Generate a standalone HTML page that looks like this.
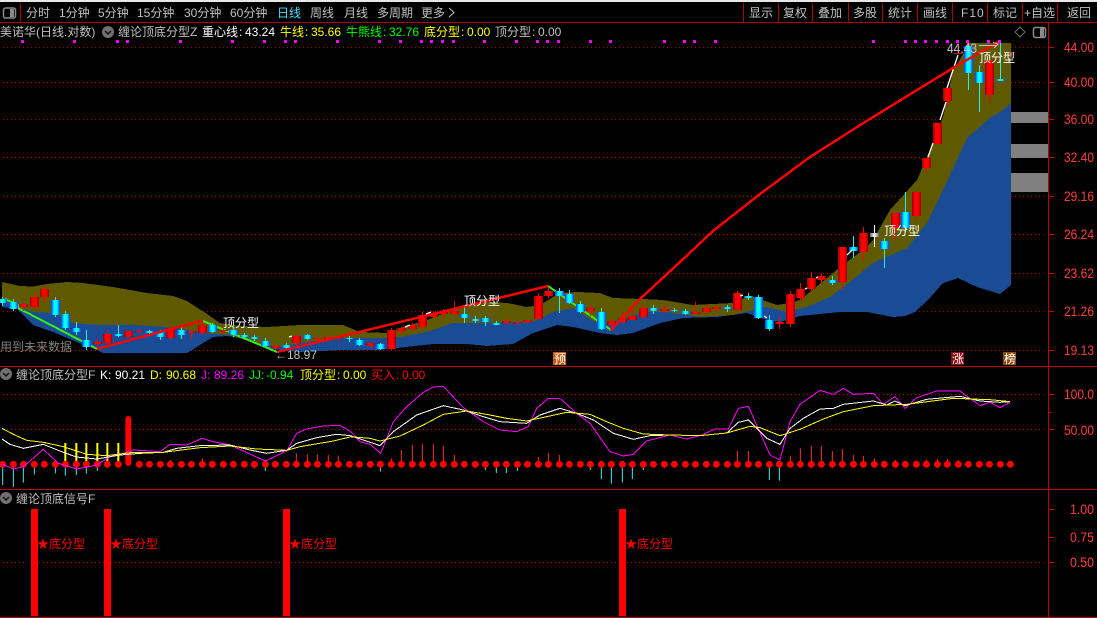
<!DOCTYPE html>
<html><head><meta charset="utf-8"><style>
html,body{margin:0;padding:0;background:#000;width:1097px;height:618px;overflow:hidden}
svg{display:block}
text{font-family:"Liberation Sans","WenQuanYi Zen Hei","Noto Sans CJK SC",sans-serif;font-size:12px;white-space:pre}
.t text{fill:#c0c0c0}
.ax text{fill:#ff3c3c;font-size:14px}
polyline{shape-rendering:crispEdges}
</style></head><body>
<svg width="1097" height="618" viewBox="0 0 1097 618" xmlns="http://www.w3.org/2000/svg">
<defs>
<linearGradient id="R"><stop offset="0" stop-color="#960000"/><stop offset=".3" stop-color="#f00"/><stop offset=".7" stop-color="#f00"/><stop offset="1" stop-color="#960000"/></linearGradient>
<linearGradient id="B"><stop offset="0" stop-color="#0038ff"/><stop offset=".35" stop-color="#0ff"/><stop offset=".65" stop-color="#0ff"/><stop offset="1" stop-color="#0038ff"/></linearGradient>
<linearGradient id="W"><stop offset="0" stop-color="#666"/><stop offset=".5" stop-color="#fff"/><stop offset="1" stop-color="#666"/></linearGradient>
</defs>
<rect width="1097" height="618" fill="#000"/>
<rect width="1097" height="2" fill="#e8e8e8"/>

<!-- toolbar -->
<g shape-rendering="crispEdges">
<rect x="0" y="22" width="1097" height="1" fill="#b00000"/>
<path d="M20.500 3V22M743.500 3V22M778.500 3V22M812.500 3V22M848.500 3V22M882.500 3V22M917.500 3V22M952.500 3V22M987.500 3V22M1022.500 3V22M1057.500 3V22" stroke="#b00000" fill="none"/>
</g>
<rect x="3.500" y="8" width="12" height="10" rx="2" fill="none" stroke="#8a8a8a" stroke-width="1.500"/><rect x="10" y="9" width="4" height="8" fill="#8a8a8a"/>
<g class="t">
<text x="26" y="17">分时</text><text x="59" y="17">1分钟</text><text x="98" y="17">5分钟</text><text x="137" y="17">15分钟</text><text x="184" y="17">30分钟</text><text x="230" y="17">60分钟</text>
<text x="277" y="17" style="fill:#4fe0ff">日线</text><text x="310" y="17">周线</text><text x="344" y="17">月线</text><text x="377" y="17">多周期</text><text x="421" y="17">更多</text>
<path d="M449 8l5 4.500-5 4.500" fill="none" stroke="#c0c0c0"/>
<text x="749" y="17">显示</text><text x="783" y="17">复权</text><text x="818" y="17">叠加</text><text x="853" y="17">多股</text><text x="888" y="17">统计</text><text x="923" y="17">画线</text><text x="961" y="17" style="letter-spacing:1px">F10</text><text x="993" y="17">标记</text><text x="1024" y="17">+自选</text><text x="1067" y="17">返回</text>
</g>

<!-- grid -->
<path d="M3 47.500H1045M3 82.500H1045M3 119.500H1045M3 157.500H1045M3 196.500H1045M3 234.500H1045M3 273.500H1045M3 311.500H1045M3 350.500H1045M3 394.500H1045M3 429.500H1045M3 562.500H1045" stroke="#b00000" stroke-dasharray="1 3" fill="none" shape-rendering="crispEdges"/>

<!-- price bands -->
<polygon fill="#5f5a00" points="2,282 20,286 33,286.500 47,284 67,282 83,283 113,287 147,293 173,296 187,301 207,314 220,323 240,326 267,327 300,325 343,325 360,332 387,333 400,328 427,320 447,312 463,305 487,302 507,303 527,307 540,305 560,293 577,292 600,293 613,298 643,299 663,300 693,305 733,303 747,297 753,297 777,305 790,303 800,300 833,273 840,267 863,250 873,240 890,210 917,180 930,150 943,117 953,71 963,54 967,43 1011,43 1011,103 1003,110 990,118 967,138 943,190 927,223 907,248 873,263 850,282 830,297 807,307 787,312 767,307 753,310 733,315 700,317 667,312 643,312 620,320 600,325 573,308 553,312 533,322 513,323 453,323 427,332 400,337 387,338 343,338 300,343 283,347 263,345 247,340 227,335 207,333 187,330 167,327 133,325 100,325 73,323 53,313 33,312 20,308 2,301" shape-rendering="crispEdges"/>
<polygon fill="#1a4c96" points="2,307 17,309 33,325 53,332 77,342 97,350 103,353 187,353 200,345 213,337 227,336 240,338 260,346 273,349 300,352 343,350 380,350 397,348 433,344 467,344 487,346 513,344 533,333 557,325 573,327 600,333 617,335 633,333 660,323 683,318 717,317 747,313 767,320 780,322 800,316 840,312 867,312 893,317 905,316 915,312 928,300 943,283 958,278 977,287 1000,294 1011,285 1011,103 1003,110 990,118 967,138 943,190 927,223 907,248 873,263 850,282 830,297 807,307 787,312 767,307 753,310 733,315 700,317 667,312 643,312 620,320 600,325 573,308 553,312 533,322 513,323 453,323 427,332 400,337 387,338 343,338 300,343 283,347 263,345 247,340 227,335 207,333 187,330 167,327 133,325 100,325 73,323 53,313 33,312 20,308 2,301" shape-rendering="crispEdges"/>

<!-- grey blocks -->
<g fill="#808080" shape-rendering="crispEdges"><rect x="1011" y="112" width="37" height="11"/><rect x="1011" y="144" width="37" height="14"/><rect x="1011" y="173" width="37" height="19"/></g>

<!-- green legs below candles -->
<polyline points="5,299 18,305 18,308 97,349" fill="none" stroke="#30f010" stroke-width="2"/>
<polyline points="203,321 277,352" fill="none" stroke="#30f010" stroke-width="2"/>
<polyline points="548,286 611,330" fill="none" stroke="#30f010" stroke-width="2"/>

<!-- wicks -->
<path fill="none" stroke="#f00" shape-rendering="crispEdges" d="M23.500 303V311M34.500 293V309M44.500 286V303M97.500 338V349M107.500 330V345M128.500 331V337M139.500 329V334M170.500 327V339M191.500 331V339M202.500 321V334M223.500 326V335M275.500 344V350M296.500 333V348M317.500 336V341M328.500 335V341M338.500 335V342M370.500 343V348M391.500 328V350M401.500 327V334M412.500 323V331M422.500 312V328M433.500 311V318M443.500 309V317M454.500 301V316M506.500 318V325M517.500 320V325M527.500 320V323M538.500 293V319M548.500 287V298M590.500 305V316M611.500 321V330M622.500 312V324M632.500 310V320M643.500 304V319M664.500 305V313M695.500 302V314M706.500 304V313M716.500 307V312M737.500 291V310M779.500 316V329M790.500 291V327M800.500 283V302M811.500 272V291M821.500 273V284M842.500 247V290M863.500 227V260M895.500 213V240M916.500 192V220M926.500 158V173M937.500 123V144M947.500 88V107M989.500 60V103"/>
<path fill="none" stroke="#30e8e8" shape-rendering="crispEdges" d="M2.500 297V306M13.500 299V311M55.500 297V317M65.500 311V330M76.500 322V335M86.500 330V350M118.500 325V337M149.500 330V334M160.500 330V340M181.500 327V339M212.500 323V333M233.500 328V337M244.500 333V339M254.500 335V341M265.500 338V347M286.500 343V350M307.500 334V340M349.500 336V342M359.500 338V346M380.500 343V350M464.500 307V323M475.500 316V323M485.500 316V326M496.500 321V325M559.500 288V313M569.500 290V304M580.500 301V313M601.500 308V330M653.500 305V314M674.500 308V312M685.500 309V315M727.500 305V312M748.500 293V300M758.500 295V319M769.500 315V331M832.500 276V285M853.500 236V258M884.500 238V268M905.500 192V232M968.500 42V90M979.500 65V112M1000.500 43V79"/>
<path d="M874.500 225V247" stroke="#fff" shape-rendering="crispEdges"/>

<!-- candle bodies -->
<g fill="url(#R)" shape-rendering="crispEdges">
<rect x="19" y="304" width="9" height="3"/><rect x="30" y="297" width="9" height="10"/><rect x="40" y="289" width="9" height="8"/><rect x="93" y="342" width="9" height="2"/><rect x="103" y="334" width="9" height="9"/><rect x="124" y="331" width="9" height="6"/><rect x="135" y="331" width="9" height="1"/><rect x="166" y="328" width="9" height="10"/><rect x="187" y="331" width="9" height="2"/><rect x="198" y="325" width="9" height="8"/><rect x="219" y="330" width="9" height="1"/><rect x="271" y="346" width="9" height="2"/><rect x="292" y="336" width="9" height="7"/><rect x="313" y="338" width="9" height="1"/><rect x="324" y="337" width="9" height="2"/><rect x="334" y="337" width="9" height="1"/><rect x="366" y="343" width="9" height="3"/><rect x="387" y="330" width="9" height="19"/><rect x="397" y="328" width="9" height="3"/><rect x="408" y="325" width="9" height="4"/><rect x="418" y="315" width="9" height="12"/><rect x="429" y="313" width="9" height="4"/><rect x="439" y="312" width="9" height="2"/><rect x="450" y="311" width="9" height="3"/><rect x="502" y="321" width="9" height="2"/><rect x="513" y="322" width="9" height="1"/><rect x="523" y="320" width="9" height="2"/><rect x="534" y="296" width="9" height="23"/><rect x="544" y="291" width="9" height="5"/><rect x="586" y="308" width="9" height="3"/><rect x="607" y="321" width="9" height="4"/><rect x="618" y="318" width="9" height="4"/><rect x="628" y="316" width="9" height="4"/><rect x="639" y="308" width="9" height="9"/><rect x="660" y="309" width="9" height="2"/><rect x="691" y="312" width="9" height="2"/><rect x="702" y="308" width="9" height="4"/><rect x="712" y="307" width="9" height="2"/><rect x="733" y="293" width="9" height="17"/><rect x="775" y="322" width="9" height="2"/><rect x="786" y="294" width="9" height="30"/><rect x="796" y="289" width="9" height="9"/><rect x="807" y="278" width="9" height="11"/><rect x="817" y="276" width="9" height="4"/><rect x="838" y="247" width="9" height="35"/><rect x="859" y="233" width="9" height="19"/><rect x="891" y="213" width="9" height="15"/><rect x="912" y="192" width="9" height="24"/><rect x="922" y="158" width="9" height="10"/><rect x="933" y="123" width="9" height="21"/><rect x="943" y="88" width="9" height="13"/><rect x="954" y="53" width="9" height="1"/><rect x="985" y="60" width="9" height="35"/><rect x="1006" y="52" width="9" height="1"/>
</g>
<g fill="url(#B)" shape-rendering="crispEdges">
<rect x="-2" y="299" width="9" height="4"/><rect x="9" y="302" width="9" height="7"/><rect x="51" y="300" width="9" height="15"/><rect x="61" y="314" width="9" height="14"/><rect x="72" y="328" width="9" height="4"/><rect x="82" y="340" width="9" height="7"/><rect x="114" y="334" width="9" height="2"/><rect x="145" y="331" width="9" height="2"/><rect x="156" y="332" width="9" height="5"/><rect x="177" y="330" width="9" height="5"/><rect x="208" y="325" width="9" height="7"/><rect x="229" y="330" width="9" height="5"/><rect x="240" y="335" width="9" height="2"/><rect x="250" y="337" width="9" height="2"/><rect x="261" y="341" width="9" height="5"/><rect x="282" y="345" width="9" height="3"/><rect x="303" y="335" width="9" height="4"/><rect x="345" y="338" width="9" height="1"/><rect x="355" y="340" width="9" height="5"/><rect x="376" y="344" width="9" height="5"/><rect x="460" y="314" width="9" height="4"/><rect x="471" y="319" width="9" height="2"/><rect x="481" y="318" width="9" height="4"/><rect x="492" y="323" width="9" height="2"/><rect x="555" y="291" width="9" height="5"/><rect x="565" y="294" width="9" height="9"/><rect x="576" y="304" width="9" height="8"/><rect x="597" y="312" width="9" height="17"/><rect x="649" y="308" width="9" height="3"/><rect x="670" y="310" width="9" height="1"/><rect x="681" y="311" width="9" height="3"/><rect x="723" y="307" width="9" height="2"/><rect x="744" y="296" width="9" height="2"/><rect x="754" y="297" width="9" height="21"/><rect x="765" y="320" width="9" height="9"/><rect x="828" y="280" width="9" height="3"/><rect x="849" y="247" width="9" height="4"/><rect x="880" y="241" width="9" height="8"/><rect x="901" y="212" width="9" height="16"/><rect x="964" y="46" width="9" height="27"/><rect x="975" y="72" width="9" height="11"/><rect x="996" y="79" width="9" height="2"/>
</g>
<rect x="870" y="233" width="9" height="4" fill="url(#W)"/>

<!-- white stroke segments -->
<path d="M847 255l5-5M928 157l5-14M940 120l6-18M947 88l11-33M289 337l3-1M405 327l5-2M426 314l5-2M740 296l3-1M767 318l-3-2M805 289l2-1M816 278l2-1" stroke="#fff" stroke-width="1.300" fill="none"/>

<!-- red legs over candles -->
<polyline points="97,349 203,320.500" fill="none" stroke="#f00" stroke-width="2.500"/>
<polyline points="277,352 548,286" fill="none" stroke="#f00" stroke-width="2.500"/>
<polyline points="611,330 640,299 680,262 713,231 760,194 810,157 865,122 930,82 958,65 1000,41" fill="none" stroke="#f00" stroke-width="2.500"/>

<!-- magenta dots -->
<path d="M21 41.500h3M73 41.500h3M116 41.500h3M126 41.500h3M179 41.500h3M231 41.500h3M263 41.500h3M284 41.500h3M294 41.500h3M336 41.500h3M378 41.500h3M399 41.500h3M420 41.500h3M430 41.500h3M441 41.500h3M452 41.500h3M483 41.500h3M515 41.500h3M536 41.500h3M546 41.500h3M557 41.500h3M589 41.500h3M609 41.500h3M663 41.500h3M683 41.500h3M693 41.500h3M714 41.500h3M872 41.500h3M904 41.500h3M914 41.500h3M924 41.500h3M935 41.500h3M946 41.500h3M956 41.500h3M966 41.500h3M987 41.500h3M998 41.500h3" stroke="#f0f" stroke-width="3" shape-rendering="crispEdges"/>

<!-- chart labels -->
<text x="223" y="327" fill="#fff">顶分型</text><text x="464" y="305" fill="#fff">顶分型</text><text x="884" y="235" fill="#fff">顶分型</text><text x="979" y="62" fill="#fff">顶分型</text>
<text x="947" y="53" fill="#c0c0c0" style="font-size:14px" textLength="30" lengthAdjust="spacingAndGlyphs">44.43</text>
<path d="M979 45.500H997M993 42.500l5 1.500-4 4" stroke="#c0c0c0" fill="none"/>
<text x="275" y="359" fill="#c0c0c0">←18.97</text>
<text x="0" y="351" fill="#808080">用到未来数据</text>
<rect x="553" y="352" width="13" height="13" fill="#c85a10"/><text x="554" y="363" fill="#fff">预</text>
<rect x="951" y="352" width="13" height="13" fill="#8c0a0a"/><text x="952" y="363" fill="#fff">涨</text>
<rect x="1003" y="352" width="13" height="13" fill="#8c4a10"/><text x="1004" y="363" fill="#fff">榜</text>

<!-- title row -->
<text x="0" y="36" fill="#c0c0c0">美诺华(日线.对数)</text>
<circle cx="108" cy="32" r="6" fill="#707070"/><path d="M105 31l3 3 3-3" stroke="#111" stroke-width="1.500" fill="none"/>
<text x="118" y="36" fill="#c0c0c0">缠论顶底分型Z</text>
<text x="202" y="36" fill="#fff">重心线</text><text x="239" y="36" fill="#fff">:</text><text x="245" y="36" fill="#fff">43.24</text>
<text x="280" y="36" fill="#ff0">牛线</text><text x="305" y="36" fill="#ff0">:</text><text x="311" y="36" fill="#ff0">35.66</text>
<text x="346" y="36" fill="#00ff00">牛熊线</text><text x="383" y="36" fill="#00ff00">:</text><text x="389" y="36" fill="#00ff00">32.76</text>
<text x="424" y="36" fill="#ff0">底分型</text><text x="461" y="36" fill="#ff0">:</text><text x="467" y="36" fill="#ff0">0.00</text>
<text x="495" y="36" fill="#c0c0c0">顶分型</text><text x="532" y="36" fill="#c0c0c0">:</text><text x="538" y="36" fill="#c0c0c0">0.00</text>
<path d="M1020 27l5 5-5 5-5-5z" fill="none" stroke="#707070"/>
<rect x="1033.500" y="27.500" width="12" height="10" rx="2" fill="none" stroke="#8a8a8a" stroke-width="1.500"/><rect x="1040" y="28" width="4" height="9" fill="#8a8a8a"/>

<!-- KDJ panel -->
<circle cx="6" cy="374" r="6" fill="#707070"/><path d="M3 373l3 3 3-3" stroke="#111" stroke-width="1.500" fill="none"/>
<text x="16" y="379" fill="#c0c0c0">缠论顶底分型F</text>
<text x="100" y="379" fill="#fff">K:</text><text x="115" y="379" fill="#fff">90.21</text>
<text x="150" y="379" fill="#ff0">D:</text><text x="166" y="379" fill="#ff0">90.68</text>
<text x="201" y="379" fill="#f0f">J:</text><text x="214" y="379" fill="#f0f">89.26</text>
<text x="249" y="379" fill="#00ff00">JJ:</text><text x="266" y="379" fill="#00ff00">-0.94</text>
<text x="300" y="379" fill="#ff0">顶分型</text><text x="337" y="379" fill="#ff0">:</text><text x="343" y="379" fill="#ff0">0.00</text>
<text x="371" y="379" fill="#f00">买入</text><text x="396" y="379" fill="#f00">:</text><text x="402" y="379" fill="#f00">0.00</text>

<g transform="translate(0,365) scale(.33333)" fill="none" stroke-width="3">
<path stroke="#ff3030" d="M511 298V285M607 298V280M889 298V265M922 298V268M952 298V268M985 298V270M1015 298V272"/>
<path stroke="#40e8f0" d="M8 298V360M40 298V366M70 298V353M103 298V328M133 298V308M166 298V325M196 298V332M229 298V330M259 298V326M292 298V318M763 298V310M796 298V318"/>
<path stroke="#ff0" stroke-width="6" d="M196 298V234M229 298V234M259 298V234M292 298V234M322 298V234M355 298V234"/>
<path stroke="#f00" stroke-width="18" stroke-linecap="round" d="M385 294V162"/>
<path stroke="#f00" stroke-width="21" stroke-linecap="round" d="M8 298h.1M40 298h.1M70 298h.1M103 298h.1M133 298h.1M166 298h.1M196 298h.1M229 298h.1M259 298h.1M292 298h.1M322 298h.1M355 298h.1M418 298h.1M448 298h.1M481 298h.1M511 298h.1M544 298h.1M574 298h.1M607 298h.1M637 298h.1M670 298h.1M700 298h.1M733 298h.1M763 298h.1M796 298h.1M826 298h.1M859 298h.1M889 298h.1M922 298h.1M952 298h.1M985 298h.1M1015 298h.1"/>
<polyline stroke="#f0f" points="6,297 40,312 70,305 130,253 175,295 230,312 290,300 330,275 370,265 400,255 480,260 510,238 560,240 607,220 640,230 690,240 730,258 796,288 860,258 890,205 920,192 970,183 1020,181 1050,198"/>
<polyline stroke="#fff" points="6,222 30,238 70,250 130,238 190,262 230,276 290,282 360,270 420,265 490,262 530,250 600,242 690,240 750,255 800,265 860,256 890,235 950,218 1010,208 1050,212"/>
<polyline stroke="#ff0" points="6,190 40,208 80,226 130,232 190,245 260,268 320,272 400,262 490,262 600,248 690,243 770,252 860,256 900,245 1000,228 1050,216"/>
</g>
<g transform="translate(350,365) scale(.33333)" fill="none" stroke-width="3">
<path stroke="#ff3030" d="M124 298V280M154 298V255M187 298V240M217 298V237M250 298V237M280 298V243M313 298V270M565 298V276M595 298V264M628 298V270M658 298V288"/>
<path stroke="#40e8f0" d="M61 298V308M91 298V320M406 298V315M439 298V324M469 298V324M502 298V318M532 298V308M721 298V315M754 298V342M784 298V356M817 298V352M847 298V342M880 298V315"/>
<path stroke="#f00" stroke-width="21" stroke-linecap="round" d="M-2 298h.1M28 298h.1M61 298h.1M91 298h.1M124 298h.1M154 298h.1M187 298h.1M217 298h.1M250 298h.1M280 298h.1M313 298h.1M343 298h.1M376 298h.1M406 298h.1M439 298h.1M469 298h.1M502 298h.1M532 298h.1M565 298h.1M595 298h.1M628 298h.1M658 298h.1M691 298h.1M721 298h.1M754 298h.1M784 298h.1M817 298h.1M847 298h.1M880 298h.1M910 298h.1M943 298h.1M973 298h.1M1006 298h.1M1036 298h.1"/>
<polyline stroke="#f0f" points="0,198 30,230 60,238 92,265 130,170 170,125 220,82 250,66 280,64 340,128 400,170 450,195 500,200 535,185 560,130 595,100 630,100 680,145 720,175 780,260 820,273 850,268 890,228 960,210 1010,222 1050,212"/>
<polyline stroke="#fff" points="0,212 40,225 90,242 130,200 200,150 280,122 340,135 400,155 450,170 530,175 570,150 630,130 680,145 730,165 790,205 850,223 900,212 960,210 1050,212"/>
<polyline stroke="#ff0" points="0,215 60,220 90,228 150,213 220,180 280,148 350,138 420,150 470,160 530,168 590,155 650,142 720,148 770,170 820,190 880,207 960,210 1050,212"/>
</g>
<g transform="translate(700,365) scale(.33333)" fill="none" stroke-width="3">
<path stroke="#ff3030" d="M112 298V258M145 298V258M271 298V273M301 298V250M334 298V243M364 298V243M397 298V258M427 298V252M460 298V270M490 298V273M523 298V280M586 298V285M679 298V283M712 298V282M742 298V282M775 298V285"/>
<path stroke="#40e8f0" d="M208 298V345M238 298V347M838 298V308M901 298V308"/>
<path stroke="#f00" stroke-width="21" stroke-linecap="round" d="M19 298h.1M49 298h.1M82 298h.1M112 298h.1M145 298h.1M175 298h.1M208 298h.1M238 298h.1M271 298h.1M301 298h.1M334 298h.1M364 298h.1M397 298h.1M427 298h.1M460 298h.1M490 298h.1M523 298h.1M553 298h.1M586 298h.1M616 298h.1M649 298h.1M679 298h.1M712 298h.1M742 298h.1M775 298h.1M805 298h.1M838 298h.1M868 298h.1M901 298h.1M931 298h.1"/>
<polyline stroke="#f0f" points="0,212 45,192 85,192 115,130 145,124 210,270 240,285 270,170 300,118 360,76 400,88 430,70 460,88 520,85 550,118 585,95 615,130 650,98 710,78 780,78 840,122 870,112 900,128 930,112"/>
<polyline stroke="#fff" points="0,212 80,204 115,172 145,165 200,220 240,238 270,190 310,160 360,132 400,130 430,118 520,108 560,120 585,108 615,122 680,103 780,94 840,108 900,112 930,110"/>
<polyline stroke="#ff0" points="0,212 80,204 150,184 180,188 240,212 300,193 370,162 430,140 520,122 620,118 760,100 870,104 930,110"/>
</g>

<!-- signal panel -->
<circle cx="6" cy="498" r="6" fill="#707070"/><path d="M3 497l3 3 3-3" stroke="#111" stroke-width="1.500" fill="none"/>
<text x="16" y="503" fill="#c0c0c0">缠论顶底信号F</text>
<g fill="#f00" shape-rendering="crispEdges"><rect x="31" y="509" width="7" height="107"/><rect x="104" y="509" width="7" height="107"/><rect x="283" y="509" width="7" height="107"/><rect x="619" y="509" width="7" height="107"/></g>
<text x="37" y="548" fill="#f00">★底分型</text><text x="110" y="548" fill="#f00">★底分型</text><text x="289" y="548" fill="#f00">★底分型</text><text x="625" y="548" fill="#f00">★底分型</text>

<!-- frame + axis -->
<g shape-rendering="crispEdges" fill="none" stroke="#c00000">
<path d="M1048.500 23V618M0 366.500H1097M0 489.500H1097M0 617.500H1097"/>
<path d="M1049 47.500h5M1049 82.500h5M1049 119.500h5M1049 157.500h5M1049 196.500h5M1049 234.500h5M1049 273.500h5M1049 311.500h5M1049 350.500h5M1049 394.500h5M1049 412.500h3M1049 429.500h5M1049 509.500h5M1049 537.500h5M1049 562.500h5"/>
</g>
<g class="ax">
<text x="1064" y="52" textLength="30" lengthAdjust="spacingAndGlyphs">44.00</text>
<text x="1064" y="87" textLength="30" lengthAdjust="spacingAndGlyphs">40.00</text>
<text x="1064" y="124" textLength="30" lengthAdjust="spacingAndGlyphs">36.00</text>
<text x="1064" y="162" textLength="30" lengthAdjust="spacingAndGlyphs">32.40</text>
<text x="1064" y="201" textLength="30" lengthAdjust="spacingAndGlyphs">29.16</text>
<text x="1064" y="239" textLength="30" lengthAdjust="spacingAndGlyphs">26.24</text>
<text x="1064" y="278" textLength="30" lengthAdjust="spacingAndGlyphs">23.62</text>
<text x="1064" y="316" textLength="30" lengthAdjust="spacingAndGlyphs">21.26</text>
<text x="1064" y="355" textLength="30" lengthAdjust="spacingAndGlyphs">19.13</text>
<text x="1064" y="399" textLength="30" lengthAdjust="spacingAndGlyphs">100.0</text>
<text x="1064" y="435" textLength="30" lengthAdjust="spacingAndGlyphs">50.00</text>
<text x="1070" y="514" textLength="24" lengthAdjust="spacingAndGlyphs">1.00</text>
<text x="1070" y="542" textLength="24" lengthAdjust="spacingAndGlyphs">0.75</text>
<text x="1070" y="567" textLength="24" lengthAdjust="spacingAndGlyphs">0.50</text>
</g>
</svg>
</body></html>
